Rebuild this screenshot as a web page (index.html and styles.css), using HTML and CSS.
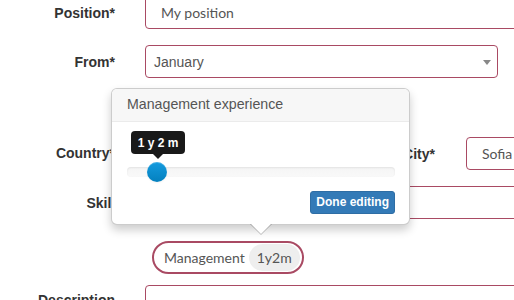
FILE: index.html
```html
<!DOCTYPE html>
<html>
<head>
<meta charset="utf-8">
<link rel="stylesheet" href="styles.css">
</head>
<body>
<div class="page">
  <form class="form">
    <label class="lbl">Position*</label>
    <div class="field wide"><span class="val lato">My position</span></div>

    <label class="lbl">From*</label>
    <div class="field select"><span class="val">January</span><span class="caret"></span></div>

    <div class="spacer"></div>
    <div class="spacer"></div>

    <label class="lbl">Country*</label>
    <div class="pair">
      <div class="field country"></div>
      <label class="lbl city">City*</label>
      <div class="field sofia"><span class="val lato">Sofia</span></div>
    </div>

    <label class="lbl skills-lbl">Skills</label>
    <div class="field wide"></div>

    <div></div>
    <div class="pills">
      <span class="pill">Management <span class="badge">1y2m</span></span>
    </div>

    <label class="lbl desc-lbl">Description</label>
    <div class="field wide desc"></div>
  </form>

  <div class="popover">
    <div class="pop-title">Management experience</div>
    <div class="pop-body">
      <div class="slider">
        <div class="track"></div>
        <div class="handle"></div>
        <div class="tip">1 y 2 m</div>
      </div>
      <div class="actions">
        <button type="button" class="btn">Done editing</button>
      </div>
    </div>
  </div>
</div>
</body>
</html>
```

FILE: styles.css
```css
html, body {
  margin: 0;
  padding: 0;
  overflow: hidden;
  background: #fff;
}
body {
  font-family: "Liberation Sans", Arial, sans-serif;
  font-size: 14px;
  color: #333;
}
.page {
  position: relative;
  width: 640px;
  height: 300px;
  overflow: hidden;
}
.form {
  display: grid;
  grid-template-columns: 115px 1fr;
  column-gap: 30px;
  row-gap: 16px;
  align-items: center;
  margin-top: -4px;
}
.lbl {
  font-weight: bold;
  font-size: 14px;
  color: #333;
  text-align: right;
}
.field {
  box-sizing: border-box;
  height: 33px;
  border: 1px solid #a94a63;
  border-radius: 4px;
  background: #fff;
  display: flex;
  align-items: center;
  position: relative;
}
.val {
  color: #555;
  font-size: 14px;
  padding-left: 8px;
}
.lato {
  font-family: Lato, "Liberation Sans", sans-serif;
  font-size: 14px;
  padding-left: 15px;
}
.wide { width: 495px; }
.select { width: 353px; }
.caret {
  position: absolute;
  right: 6px;
  top: 14px;
  width: 0;
  height: 0;
  border-left: 4px solid transparent;
  border-right: 4px solid transparent;
  border-top: 5px solid #888;
}
.spacer { height: 26px; }
.pair {
  display: flex;
  align-items: center;
  margin-top: 1px;
}
.country { width: 230px; }
.city {
  width: 60px;
  margin-right: 31px;
}
.sofia { width: 120px; }
.skills-lbl {
  margin-right: -8px;
  margin-top: 1px;
}
.pills {
  padding-left: 7px;
  margin-top: 6px;
  display: flex;
}
.pill {
  box-sizing: border-box;
  height: 33px;
  border: 2px solid #a94a63;
  border-radius: 17px;
  display: inline-flex;
  align-items: center;
  padding: 0 2px 0 10px;
  font-family: Lato, "Liberation Sans", sans-serif;
  font-size: 14px;
  color: #555;
  gap: 4px;
}
.badge {
  background: #eee;
  border-radius: 14px;
  height: 27px;
  display: inline-flex;
  align-items: center;
  padding: 0 8px;
}
.desc-lbl { margin-top: -8px; }
.desc { margin-top: -5px; }

/* popover */
.popover {
  position: absolute;
  left: 111px;
  top: 88px;
  width: 299px;
  box-sizing: border-box;
  background: #fff;
  border: 1px solid rgba(0,0,0,0.2);
  border-radius: 6px;
  box-shadow: 0 5px 10px rgba(0,0,0,0.2);
}
.popover::before,
.popover::after {
  content: "";
  position: absolute;
  left: 50%;
  width: 0;
  height: 0;
  border-style: solid;
  border-color: transparent;
}
.popover::before {
  bottom: -11px;
  margin-left: -11px;
  border-width: 11px 11px 0;
  border-top-color: rgba(0,0,0,0.25);
}
.popover::after {
  bottom: -10px;
  margin-left: -10px;
  border-width: 10px 10px 0;
  border-top-color: #fff;
}
.pop-title {
  background: #f7f7f7;
  border-bottom: 1px solid #ebebeb;
  border-radius: 5px 5px 0 0;
  padding: 7px 15px 8px;
  line-height: 17px;
  font-size: 14.2px;
  color: #555;
}
.pop-body {
  padding: 9px 14px 10px 15px;
}
.slider {
  position: relative;
  height: 51px;
}
.track {
  position: absolute;
  left: 0;
  right: 0;
  top: 36px;
  height: 10px;
  border-radius: 4px;
  background: linear-gradient(#f5f5f5, #f9f9f9);
  box-shadow: inset 0 1px 2px rgba(0,0,0,0.08);
}
.handle {
  position: absolute;
  left: 20px;
  top: 31px;
  width: 20px;
  height: 20px;
  border-radius: 50%;
  background: linear-gradient(#149bdf, #0480be);
  box-shadow: inset 0 1px 0 rgba(255,255,255,0.2), 0 1px 2px rgba(0,0,0,0.05);
}
.tip {
  position: absolute;
  left: 4px;
  top: 0;
  width: 54px;
  height: 23px;
  box-sizing: border-box;
  background: rgba(0,0,0,0.9);
  border-radius: 4px;
  color: #fff;
  font-weight: bold;
  font-size: 12px;
  display: flex;
  align-items: center;
  justify-content: center;
}
.tip::after {
  content: "";
  position: absolute;
  left: 50%;
  bottom: -5px;
  margin-left: -5px;
  border-left: 5px solid transparent;
  border-right: 5px solid transparent;
  border-top: 5px solid rgba(0,0,0,0.9);
}
.actions {
  display: flex;
  justify-content: flex-end;
  margin-top: 9px;
}
.btn {
  font-family: "Liberation Sans", Arial, sans-serif;
  font-weight: bold;
  font-size: 12px;
  line-height: 19px;
  padding: 1px 5px;
  color: #fff;
  background: #337ab7;
  border: 1px solid #2e6da4;
  border-radius: 3px;
}
```
